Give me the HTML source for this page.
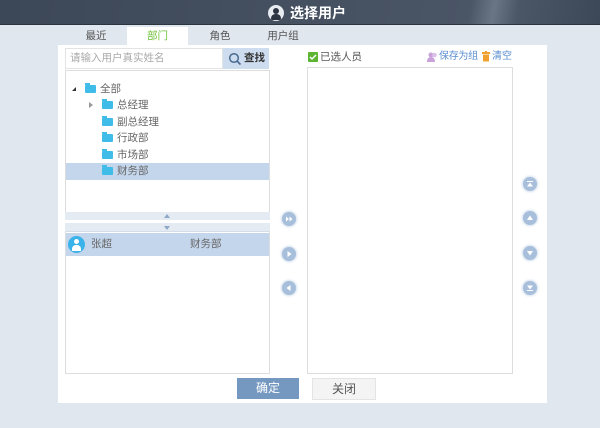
<!DOCTYPE html>
<html><head><meta charset="utf-8"><style>
*{margin:0;padding:0;box-sizing:border-box}
body{width:600px;height:428px;background:#e1e7ee;font-family:"Liberation Sans","Noto Sans CJK SC",sans-serif;font-size:11px;color:#555;position:relative;overflow:hidden}
.a{position:absolute}
.hdr{left:0;top:0;width:600px;height:25px;background:linear-gradient(100deg,#3c4757 0%,#4a5566 78%,#6a7585 82%,#4b5667 86%,#3c4757 100%);border-bottom:1px solid #2c3440}
.tab{top:27px;height:18px;line-height:18px;text-align:center;font-size:10.5px;color:#555}
.panel{left:58px;top:45px;width:489px;height:358px;background:#fff}
.fold{display:inline-block;width:11px;height:8px;background:#3fbde8;border-radius:1px;vertical-align:-1px;margin-right:4px;position:relative}
.fold:before{content:"";position:absolute;left:0;top:-2px;width:5px;height:2px;background:#3fbde8}
.row{position:absolute;height:17px;line-height:17px;font-size:10.5px;color:#666}
.circ{position:absolute;width:14px;height:14px;border-radius:50%;background:#a8bfdc;box-shadow:0 0 2px 1px #d2deec}
.circ svg{position:absolute;left:0;top:0}
</style></head><body>
<div class="a hdr"></div>
<div class="a" style="left:268px;top:5px;width:16px;height:16px;border-radius:50%;background:#e8ecf0"><div style="position:absolute;left:5px;top:3px;width:6px;height:6px;border-radius:50%;background:#2c3440"></div><div style="position:absolute;left:3px;top:9px;width:10px;height:6px;border-radius:5px 5px 2px 2px;background:#2c3440"></div></div>
<div class="a" style="left:290px;top:4px;color:#fff;font-size:14px;font-weight:bold;line-height:18px">选择用户</div>

<div class="a tab" style="left:72px;width:48px">最近</div>
<div class="a tab" style="left:127px;width:61px;background:#fff;color:#6fc23a;height:19px">部门</div>
<div class="a tab" style="left:196px;width:48px">角色</div>
<div class="a tab" style="left:259px;width:48px">用户组</div>

<div class="a panel"></div>
<div class="a" style="left:65px;top:48px;width:158px;height:21px;border:1px solid #e3e3e3;color:#aaa;line-height:19px;padding-left:4px;font-size:10.5px">请输入用户真实姓名</div>
<div class="a" style="left:223px;top:48px;width:46px;height:21px;background:#cddcee;line-height:21px;font-size:10.5px;color:#333;font-weight:bold;padding-left:21px">查找</div>
<svg class="a" style="left:228px;top:52px" width="14" height="14"><circle cx="6" cy="6" r="4.3" fill="none" stroke="#4a6a90" stroke-width="1.5"/><line x1="9" y1="9" x2="12.5" y2="12.5" stroke="#4a6a90" stroke-width="1.6"/></svg>
<div class="a" style="left:65px;top:70px;width:205px;height:304px;border:1px solid #ddd"></div>
<div class="a" style="left:72px;top:87px;width:0;height:0;border-left:4px solid transparent;border-bottom:4px solid #333"></div>
<div class="row" style="left:85px;top:81px"><span class="fold"></span>全部</div>
<div class="a" style="left:89px;top:102px;width:0;height:0;border-top:3.5px solid transparent;border-bottom:3.5px solid transparent;border-left:4px solid #999"></div>
<div class="row" style="left:102px;top:97px"><span class="fold"></span>总经理</div>
<div class="row" style="left:102px;top:114px"><span class="fold"></span>副总经理</div>
<div class="row" style="left:102px;top:130px"><span class="fold"></span>行政部</div>
<div class="a" style="left:66px;top:163px;width:203px;height:17px;background:#c4d6ec"></div>
<div class="row" style="left:102px;top:147px"><span class="fold"></span>市场部</div>
<div class="row" style="left:102px;top:163px"><span class="fold"></span>财务部</div>
<div class="a" style="left:65px;top:212px;width:205px;height:8px;background:#e4ebf3"></div>
<div class="a" style="left:164px;top:214px;border-left:3px solid transparent;border-right:3px solid transparent;border-bottom:4px solid #8fa8c8"></div>
<div class="a" style="left:65px;top:220px;width:205px;height:3px;background:#fff"></div>
<div class="a" style="left:65px;top:223px;width:205px;height:9px;background:#e4ebf3;border-bottom:1px solid #d4dde8"></div>
<div class="a" style="left:164px;top:226px;border-left:3px solid transparent;border-right:3px solid transparent;border-top:4px solid #8fa8c8"></div>
<div class="a" style="left:66px;top:233px;width:203px;height:23px;background:#c4d6ec"></div>
<div class="a" style="left:68px;top:236px;width:17px;height:17px;border-radius:50%;background:#3ab2ea"><div style="position:absolute;left:6px;top:3px;width:5px;height:5px;border-radius:50%;background:#fff"></div><div style="position:absolute;left:4px;top:9px;width:9px;height:6px;border-radius:4px 4px 0 0;background:#fff"></div></div>
<div class="row" style="left:91px;top:236px">张超</div>
<div class="row" style="left:190px;top:236px">财务部</div>
<div class="circ" style="left:282px;top:212px"><svg width="14" height="14"><path d="M4 4.5L7 7 4 9.5zM7.5 4.5L10.5 7 7.5 9.5z" fill="#fff"/></svg></div>
<div class="circ" style="left:282px;top:247px"><svg width="14" height="14"><path d="M5.5 4L9.5 7 5.5 10z" fill="#fff"/></svg></div>
<div class="circ" style="left:282px;top:281px"><svg width="14" height="14"><path d="M8.5 4L4.5 7 8.5 10z" fill="#fff"/></svg></div>
<div class="a" style="left:308px;top:52px;width:10px;height:10px;background:#5cb531;border-radius:1px"><svg width="10" height="10"><path d="M2 5l2 2 4-4" stroke="#fff" stroke-width="1.5" fill="none"/></svg></div>
<div class="a" style="left:320px;top:49px;font-size:10.5px;color:#555;line-height:16px">已选人员</div>
<div class="a" style="left:427px;top:52px;width:11px;height:10px"><svg width="11" height="10"><circle cx="4" cy="3" r="2.5" fill="#c9a2dc"/><path d="M0 10q0-5 4-5q4 0 4 5z" fill="#c9a2dc"/><circle cx="7.5" cy="3" r="2.3" fill="#dcc2ea"/></svg></div>
<div class="a" style="left:439px;top:49px;font-size:10px;color:#5a8ed0;line-height:16px;letter-spacing:-0.3px">保存为组</div>
<div class="a" style="left:482px;top:51px;width:8px;height:11px"><svg width="8" height="11"><rect x="0" y="1" width="8" height="2" fill="#f0a030"/><rect x="1" y="3.5" width="6" height="7" fill="#f0a030"/><rect x="3" y="0" width="2" height="1.5" fill="#f0a030"/></svg></div>
<div class="a" style="left:492px;top:49px;font-size:10px;color:#5a8ed0;line-height:16px">清空</div>
<div class="a" style="left:307px;top:67px;width:206px;height:307px;border:1px solid #ddd"></div>
<div class="circ" style="left:523px;top:177px"><svg width="14" height="14"><path d="M4 4h6v1H4zM7 5.5L10 9.5H4z" fill="#fff"/></svg></div>
<div class="circ" style="left:523px;top:211px"><svg width="14" height="14"><path d="M7 4.5L10 9H4z" fill="#fff"/></svg></div>
<div class="circ" style="left:523px;top:246px"><svg width="14" height="14"><path d="M7 9.5L10 5H4z" fill="#fff"/></svg></div>
<div class="circ" style="left:523px;top:281px"><svg width="14" height="14"><path d="M4 9h6v1H4zM7 8.5L10 4.5H4z" fill="#fff"/></svg></div>
<div class="a" style="left:237px;top:378px;width:62px;height:21px;background:#7598c0;color:#fff;text-align:center;line-height:21px;font-size:12px">确定</div>
<div class="a" style="left:312px;top:378px;width:64px;height:22px;background:#f4f4f4;border:1px solid #e4e4e4;color:#555;text-align:center;line-height:20px;font-size:12px">关闭</div>
</body></html>
